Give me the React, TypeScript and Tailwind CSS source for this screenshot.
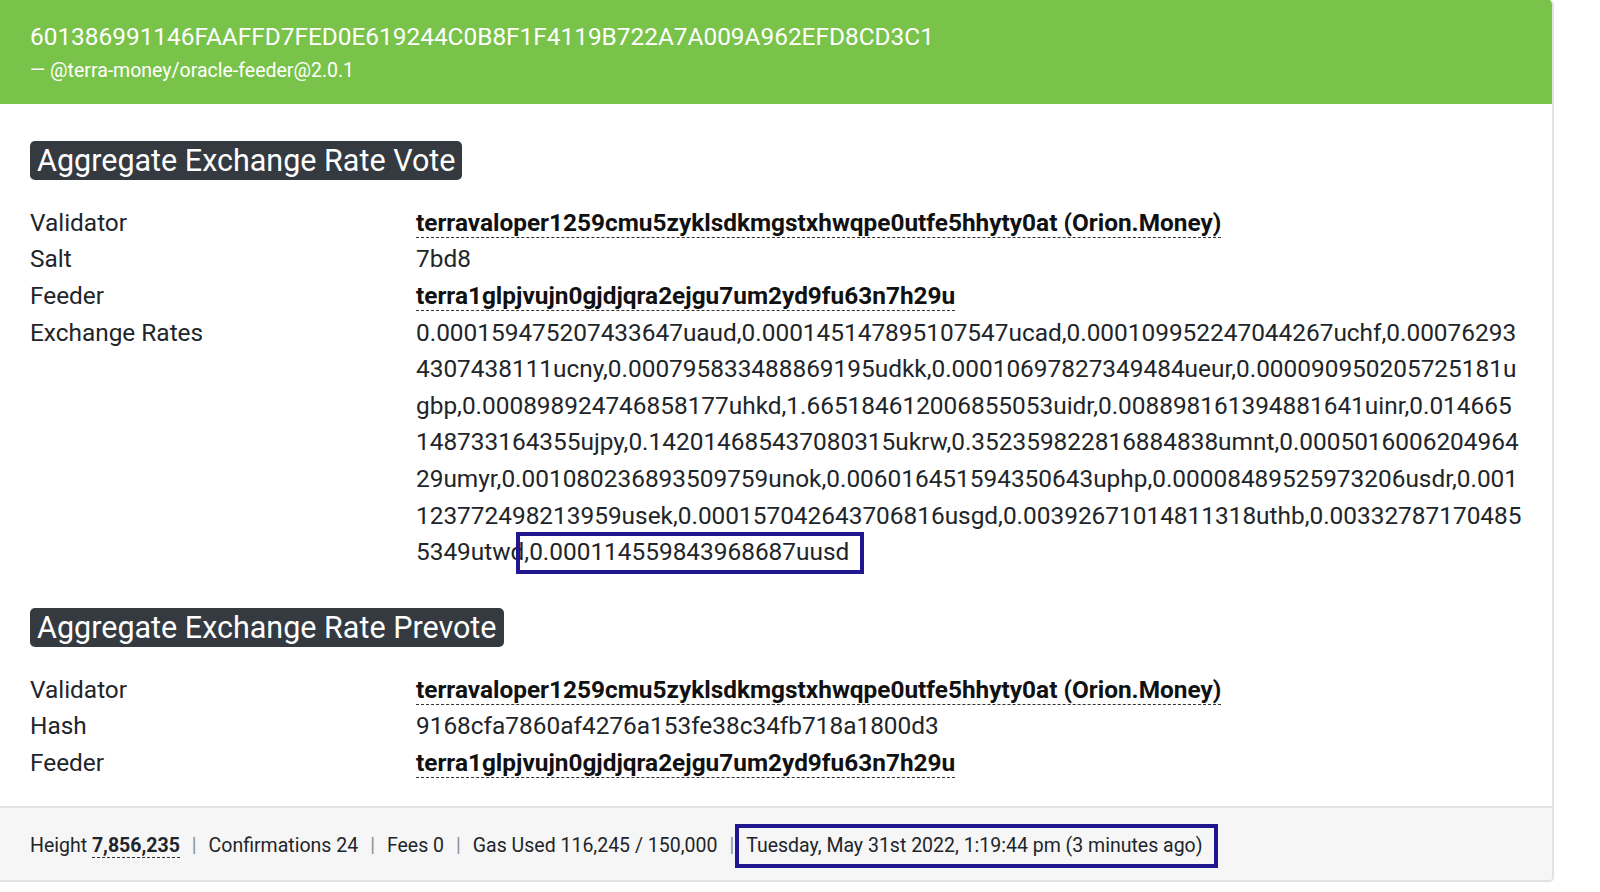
import * as React from "react"

const VALIDATOR = "terravaloper1259cmu5zyklsdkmgstxhwqpe0utfe5hhyty0at (Orion.Money)"
const FEEDER = "terra1glpjvujn0gjdjqra2ejgu7um2yd9fu63n7h29u"

const RATES =
  "0.000159475207433647uaud,0.000145147895107547ucad,0.000109952247044267uchf,0.000762934307438111ucny,0.000795833488869195udkk,0.00010697827349484ueur,0.000090950205725181ugbp,0.000898924746858177uhkd,1.665184612006855053uidr,0.008898161394881641uinr,0.014665148733164355ujpy,0.142014685437080315ukrw,0.352359822816884838umnt,0.00050160062049642 9umyr,0.001080236893509759unok,0.006016451594350643uphp,0.000084895259732 06usdr,0.001123772498213959usek,0.000157042643706816usgd,0.003926710148113 18uthb,0.003327871704855349utwd".replace(/ /g, "")
const LAST_RATE = ",0.000114559843968687uusd"

function Addr({ children }: { children: React.ReactNode }) {
  return (
    <span className="font-bold text-[#111] border-b border-dashed border-[#333]">
      {children}
    </span>
  )
}

function Row({ label, children }: { label: string; children: React.ReactNode }) {
  return (
    <div className="grid grid-cols-[386px_1fr]">
      <div>{label}</div>
      <div className="min-w-0">{children}</div>
    </div>
  )
}

function SectionTitle({ children }: { children: React.ReactNode }) {
  return (
    <div className="flex">
      <h3 className="rounded-[5px] bg-[#343a40] px-[7px] py-[2px] text-[30.5px] leading-[35px] text-white">
        {children}
      </h3>
    </div>
  )
}

function Sep() {
  return <span className="mx-[12px] text-[#8a8f94]">|</span>
}

export default function App() {
  return (
    <div className="min-h-screen bg-white text-[#212529] [font-family:Roboto,'Liberation_Sans',sans-serif]">
      <div className="w-[1554px] overflow-hidden rounded-r-[5px] border-r-2 border-b-2 border-[#e2e2e2]">
        <header className="bg-[#79c34a] px-[30px] py-[19px] text-white">
          <div className="text-[24.4px] leading-[36.6px]">
            601386991146FAAFFD7FED0E619244C0B8F1F4119B722A7A009A962EFD8CD3C1
          </div>
          <div className="text-[19.5px] leading-[29.3px]">— @terra-money/oracle-feeder@2.0.1</div>
        </header>

        <div className="px-[30px] pt-[37px] pb-[24px] text-[24.4px] leading-[36.6px]">
          <SectionTitle>Aggregate Exchange Rate Vote</SectionTitle>
          <div className="mt-[25px]">
            <Row label="Validator">
              <Addr>{VALIDATOR}</Addr>
            </Row>
            <Row label="Salt">7bd8</Row>
            <Row label="Feeder">
              <Addr>{FEEDER}</Addr>
            </Row>
            <Row label="Exchange Rates">
              <div className="break-all">
                {RATES}
                <span className="relative">
                  {LAST_RATE}
                  <span className="pointer-events-none absolute -left-[8px] -right-[15px] -top-[5px] -bottom-[8px] border-[4px] border-[#1f1690]" />
                </span>
              </div>
            </Row>
          </div>

          <div className="mt-[37px]">
            <SectionTitle>Aggregate Exchange Rate Prevote</SectionTitle>
          </div>
          <div className="mt-[25px]">
            <Row label="Validator">
              <Addr>{VALIDATOR}</Addr>
            </Row>
            <Row label="Hash">9168cfa7860af4276a153fe38c34fb718a1800d3</Row>
            <Row label="Feeder">
              <Addr>{FEEDER}</Addr>
            </Row>
          </div>
        </div>

        <footer className="border-t-2 border-[#e2e2e2] bg-[#f6f6f6] px-[30px] pt-[23px] pb-[20px] text-[19.5px] leading-[29.3px]">
          Height <span className="font-bold border-b border-dashed border-[#333]">7,856,235</span>
          <Sep />
          Confirmations 24
          <Sep />
          Fees 0
          <Sep />
          Gas Used 116,245 / 150,000
          <Sep />
          <span className="relative">
            Tuesday, May 31st 2022, 1:19:44 pm (3 minutes ago)
            <span className="pointer-events-none absolute -left-[11px] -right-[15px] -top-[10px] -bottom-[11px] border-[4px] border-[#1f1690]" />
          </span>
        </footer>
      </div>
    </div>
  )
}
